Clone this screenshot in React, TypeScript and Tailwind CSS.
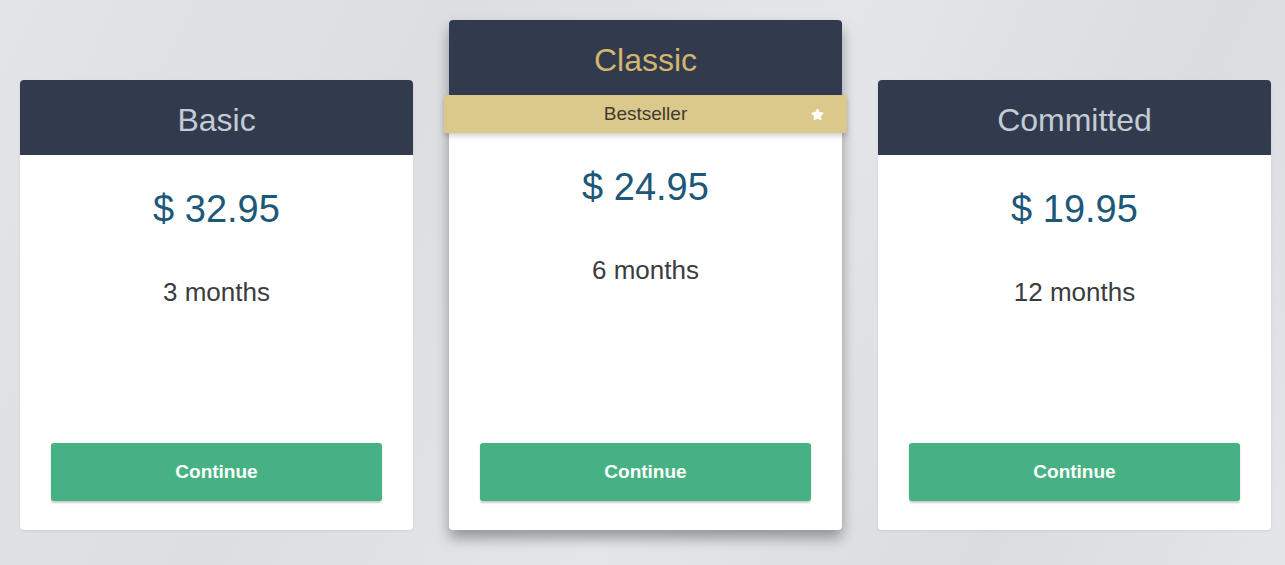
import { FaStar } from "react-icons/fa";

type Plan = {
  name: string;
  price: string;
  term: string;
  featured?: boolean;
};

const plans: Plan[] = [
  { name: "Basic", price: "$ 32.95", term: "3 months" },
  { name: "Classic", price: "$ 24.95", term: "6 months", featured: true },
  { name: "Committed", price: "$ 19.95", term: "12 months" },
];

function PlanCard({ plan }: { plan: Plan }) {
  return (
    <div
      className={
        plan.featured
          ? "relative w-[393px] h-[510px] flex flex-col bg-white rounded-[4px] shadow-[0_8px_14px_rgba(0,0,0,0.35)]"
          : "relative w-[393px] h-[450px] mt-[60px] flex flex-col bg-white rounded-[4px] shadow-[0_1px_3px_rgba(0,0,0,0.08)]"
      }
    >
      {/* header */}
      <div
        className={
          plan.featured
            ? "h-[76px] bg-[#323a4e] rounded-t-[4px] flex items-center justify-center pt-[4px]"
            : "h-[75px] bg-[#323a4e] rounded-t-[4px] flex items-center justify-center pt-[4px]"
        }
      >
        <span
          className={
            plan.featured
              ? "text-[32px] text-[#d3b56d]"
              : "text-[32px] text-[#c3cbd5]"
          }
        >
          {plan.name}
        </span>
      </div>

      {/* ribbon */}
      {plan.featured && (
        <div className="relative -mx-[5px] -mt-[1px] h-[38px] bg-[#dac98a] flex items-center justify-center shadow-[0_3px_5px_rgba(0,0,0,0.18)] z-10">
          <span className="text-[19px] text-[#3d3a33]">Bestseller</span>
          <FaStar className="absolute right-[23px] top-[13px] text-[13px] text-white" />
        </div>
      )}

      {/* body */}
      <div className="flex-1 flex flex-col items-center">
        <div className="mt-[32px] text-[38px] leading-[44px] text-[#1d5878]">
          {plan.price}
        </div>
        <div className="mt-[45px] text-[26px] leading-[32px] text-[#3b3c3e]">
          {plan.term}
        </div>
      </div>

      {/* button */}
      <div className="px-[31px] pb-[29px]">
        <button className="w-full h-[58px] bg-[#46b283] rounded-[3px] shadow-[0_2px_2px_rgba(0,0,0,0.2)] text-white text-[19px] font-bold">
          Continue
        </button>
      </div>
    </div>
  );
}

export default function App() {
  return (
    <div
      className="w-[1285px] h-[565px] overflow-hidden bg-[linear-gradient(115deg,#e2e4e7_0%,#dcdee1_30%,#e4e6e9_55%,#dadcdf_80%,#e3e5e8_100%)] flex flex-row gap-[36px] pl-[20px] pt-[20px]"
      style={{ fontFamily: '"Liberation Sans", Arial, sans-serif' }}
    >
      {plans.map((p) => (
        <PlanCard key={p.name} plan={p} />
      ))}
    </div>
  );
}
